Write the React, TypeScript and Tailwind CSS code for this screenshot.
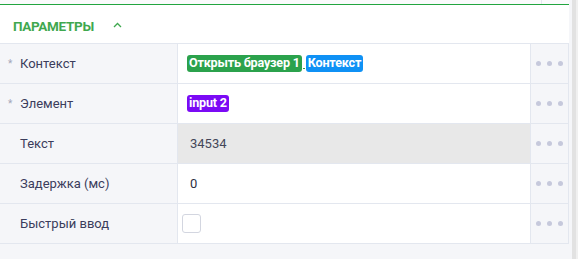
const rows = [
  { label: "Контекст", required: true, kind: "context" },
  { label: "Элемент", required: true, kind: "element" },
  { label: "Текст", required: false, kind: "text" },
  { label: "Задержка (мс)", required: false, kind: "delay" },
  { label: "Быстрый ввод", required: false, kind: "check" },
];

const Dots = () => (
  <div className="flex items-center justify-center gap-[6px]">
    <span className="w-[5px] h-[5px] rounded-full bg-[#c6c9dc]" />
    <span className="w-[5px] h-[5px] rounded-full bg-[#c6c9dc]" />
    <span className="w-[5px] h-[5px] rounded-full bg-[#c6c9dc]" />
  </div>
);

const Badge = ({ color, children }: { color: string; children: React.ReactNode }) => (
  <span className={`inline-flex items-center h-[17px] px-[2px] rounded-[3px] text-white font-bold text-[12.6px] leading-none tracking-[-0.2px] ${color}`}>
    {children}
  </span>
);

const Value = ({ kind }: { kind: string }) => {
  if (kind === "context")
    return (
      <div className="flex items-center px-[9px]">
        <Badge color="bg-[#2ba24c]">Открыть браузер 1</Badge>
        <span className="w-[2px] h-px bg-[#2ba24c] self-end mb-[3px] mx-px" />
        <Badge color="bg-[#0f91f5]">Контекст</Badge>
      </div>
    );
  if (kind === "element")
    return (
      <div className="flex items-center px-[9px]">
        <Badge color="bg-[#7b0af5]">input 2</Badge>
      </div>
    );
  if (kind === "text") return <span className="px-[12px] text-[#444659]">34534</span>;
  if (kind === "delay") return <span className="px-[12px] text-[#2d2f42]">0</span>;
  return (
    <div className="px-[4px]">
      <div className="w-[19px] h-[19px] rounded-[3px] border border-[#d3d6e0] bg-white" />
    </div>
  );
};

export default function App() {
  return (
    <div className="flex w-[578px] h-[259px] bg-[#f5f6f9] text-[13px] font-['Roboto',sans-serif] overflow-hidden">
      <div className="flex flex-col w-[569px]">
        <div className="h-[4px] flex bg-[#fafbfc]">
          <div className="w-[542px] border-r border-[#e4e7ee]" />
        </div>
        <div className="h-px bg-[#22a540]" />
        <div className="h-[39px] bg-white flex items-center pl-[13px] pt-[4px] gap-[19px] border-b border-[#e3e7ef]">
          <span className="font-bold text-[#3fa84f] text-[13.5px] tracking-[-0.3px]">ПАРАМЕТРЫ</span>
          <svg width="9" height="6" viewBox="0 0 9 6" className="mt-[-2px]">
            <path d="M1 5 L4.5 1.5 L8 5" fill="none" stroke="#3fa84f" strokeWidth="1.3" />
          </svg>
        </div>
        {rows.map((r) => (
          <div key={r.label} className="flex h-[40px] border-b border-[#e3e7ef]">
            <div className="w-[178px] flex items-center border-r border-[#e3e7ef] text-[#3b3d5c]">
              <span className="w-[20px] pl-[8px] text-[#a4a7b8] text-[10px]">{r.required ? "*" : ""}</span>
              <span>{r.label}</span>
            </div>
            <div className={`w-[353px] flex items-center border-r border-[#e3e7ef] ${r.kind === "text" ? "bg-[#e8e8e8]" : "bg-white"}`}>
              <Value kind={r.kind} />
            </div>
            <div className="w-[38px] flex items-center justify-center border-r border-[#e3e7ef]">
              <Dots />
            </div>
          </div>
        ))}
      </div>
      <div className="w-[9px] flex">
        <div className="w-[3px] bg-[#f5f6f9]" />
        <div className="w-[4px] bg-[#e2e2e2]" />
        <div className="w-[2px] bg-[#f0f0f0]" />
      </div>
    </div>
  );
}
